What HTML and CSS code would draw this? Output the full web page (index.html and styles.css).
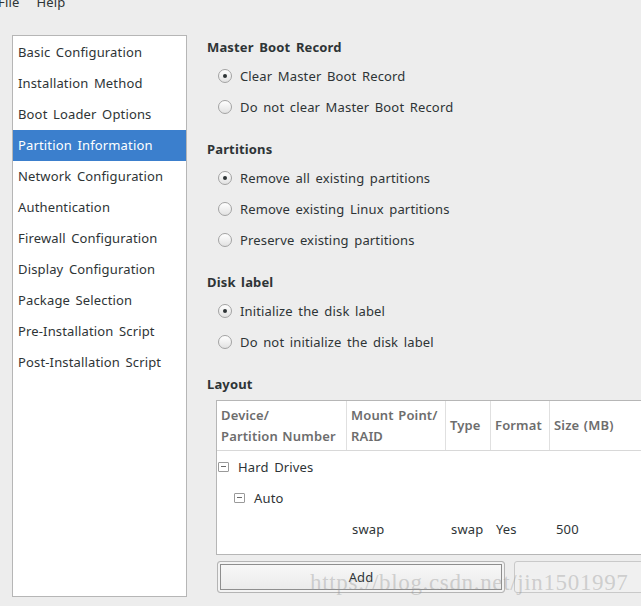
FILE: index.html
```html
<!DOCTYPE html>
<html>
<head>
<meta charset="utf-8">
<link rel="stylesheet" href="styles.css">
</head>
<body>
<div class="menubar">
  <span class="menu-item">File</span>
  <span class="menu-item">Help</span>
</div>
<div class="main">
  <div class="sidebar">
    <div class="nav-item">Basic Configuration</div>
    <div class="nav-item">Installation Method</div>
    <div class="nav-item">Boot Loader Options</div>
    <div class="nav-item selected">Partition Information</div>
    <div class="nav-item">Network Configuration</div>
    <div class="nav-item">Authentication</div>
    <div class="nav-item">Firewall Configuration</div>
    <div class="nav-item">Display Configuration</div>
    <div class="nav-item">Package Selection</div>
    <div class="nav-item">Pre-Installation Script</div>
    <div class="nav-item">Post-Installation Script</div>
  </div>
  <div class="content">
    <div class="section">
      <div class="heading">Master Boot Record</div>
      <div class="radio-row"><span class="radio checked"></span>Clear Master Boot Record</div>
      <div class="radio-row"><span class="radio"></span>Do not clear Master Boot Record</div>
    </div>
    <div class="section">
      <div class="heading">Partitions</div>
      <div class="radio-row"><span class="radio checked"></span>Remove all existing partitions</div>
      <div class="radio-row"><span class="radio"></span>Remove existing Linux partitions</div>
      <div class="radio-row"><span class="radio"></span>Preserve existing partitions</div>
    </div>
    <div class="section">
      <div class="heading">Disk label</div>
      <div class="radio-row"><span class="radio checked"></span>Initialize the disk label</div>
      <div class="radio-row"><span class="radio"></span>Do not initialize the disk label</div>
    </div>
    <div class="section">
      <div class="heading layout-heading">Layout</div>
      <div class="table">
        <div class="thead">
          <div class="th first">Device/<br>Partition Number</div>
          <div class="th">Mount Point/<br>RAID</div>
          <div class="th">Type</div>
          <div class="th">Format</div>
          <div class="th">Size (MB)</div>
        </div>
        <div class="tree-row level0"><span class="expander"></span>Hard Drives</div>
        <div class="tree-row level1"><span class="expander"></span>Auto</div>
        <div class="trow">
          <div class="td"></div>
          <div class="td">swap</div>
          <div class="td">swap</div>
          <div class="td">Yes</div>
          <div class="td size">500</div>
        </div>
      </div>
      <div class="buttons">
        <div class="btn default">Add</div>
        <div class="btn disabled">Edit</div>
      </div>
    </div>
  </div>
</div>
<div class="watermark">https://blog.csdn.net/jin1501997</div>
</body>
</html>
```

FILE: styles.css
```css
html, body {
  margin: 0;
  padding: 0;
  overflow: hidden;
}
body {
  width: 641px;
  height: 606px;
  background: #ededed;
  color: #2e3436;
  font-family: "Noto Sans", "DejaVu Sans", sans-serif;
  font-size: 13px;
  letter-spacing: 0.15px;
  word-spacing: 2px;
  position: relative;
}
.menubar {
  display: flex;
  gap: 17px;
  height: 11px;
  margin-top: -7px;
  line-height: 18px;
  margin-left: -2px;
}
.main {
  display: flex;
  padding: 31px 0 0 12px;
  gap: 20px;
}
.sidebar {
  width: 173px;
  height: 559px;
  flex: none;
  background: #ffffff;
  border: 1px solid #b6b6b6;
  padding-top: 1px;
}
.nav-item {
  height: 31px;
  line-height: 31px;
  padding-left: 5px;
  white-space: nowrap;
}
.nav-item.selected {
  background: #3b7fcd;
  color: #ffffff;
}
.content {
  flex: none;
  width: 480px;
  margin-top: -1px;
}
.section {
  margin-bottom: 14px;
}
.heading {
  height: 26px;
  line-height: 26px;
  font-weight: bold;
  color: #2e3436;
}
.layout-heading {
  margin-bottom: 3px;
}
.radio-row {
  height: 31px;
  display: flex;
  align-items: center;
  padding-left: 11px;
  gap: 8px;
  white-space: nowrap;
}
.radio {
  width: 12px;
  height: 12px;
  border-radius: 50%;
  border: 1px solid #a3a3a3;
  background: linear-gradient(#ffffff, #e2e2e2);
  position: relative;
  flex: none;
}
.radio.checked::after {
  content: "";
  position: absolute;
  width: 4px;
  height: 4px;
  border-radius: 50%;
  background: #2e3436;
  left: 4px;
  top: 4px;
}
.table {
  margin-left: 9px;
  width: 470px;
  height: 153px;
  background: #ffffff;
  border: 1px solid #b6b6b6;
}
.thead, .trow {
  display: grid;
  grid-template-columns: 129px 99px 45px 59px 137px;
}
.thead {
  height: 49px;
  border-bottom: 1px solid #d8d8d8;
}
.th {
  border-left: 1px solid #e0e0e0;
  padding-left: 4px;
  display: flex;
  align-items: center;
  color: #6d6d6d;
  font-weight: 600;
  line-height: 21px;
  white-space: nowrap;
  word-spacing: 1px;
}
.th.first {
  border-left: none;
}
.tree-row {
  height: 31px;
  display: flex;
  align-items: center;
  gap: 9px;
  white-space: nowrap;
}
.tree-row.level0 {
  padding-left: 1px;
}
.tree-row.level1 {
  padding-left: 17px;
}
.expander {
  width: 9px;
  height: 8px;
  border: 1px solid #9a9a9a;
  border-radius: 1px;
  position: relative;
  flex: none;
}
.expander::after {
  content: "";
  position: absolute;
  left: 2px;
  right: 2px;
  top: 3px;
  height: 1px;
  background: #6a6a6a;
}
.trow {
  height: 31px;
  align-items: center;
}
.td {
  padding-left: 5px;
  border-left: 1px solid transparent;
  white-space: nowrap;
}
.td.size {
  padding-left: 6px;
}
.buttons {
  display: flex;
  gap: 9px;
  margin-left: 10px;
  margin-top: 6px;
}
.btn {
  height: 30px;
  line-height: 30px;
  text-align: center;
  border-radius: 3px;
  flex: none;
}
.btn.default {
  width: 286px;
  border: 1px solid #b4b4b4;
  background: linear-gradient(#f9f9f9, #e9e9e9);
  box-shadow: inset 0 0 0 2px #f3f3f3, inset 0 0 0 3px #8e8e8e;
  color: #2e3436;
}
.btn.disabled {
  width: 200px;
  border: 1px solid #c9c9c9;
  background: #f0f0f0;
  color: transparent;
}
.watermark {
  position: absolute;
  left: 310px;
  top: 570px;
  font-family: "Liberation Serif", serif;
  font-size: 23px;
  color: rgba(150, 150, 150, 0.4);
  white-space: nowrap;
  letter-spacing: 0.65px;
  word-spacing: 0;
}
```
